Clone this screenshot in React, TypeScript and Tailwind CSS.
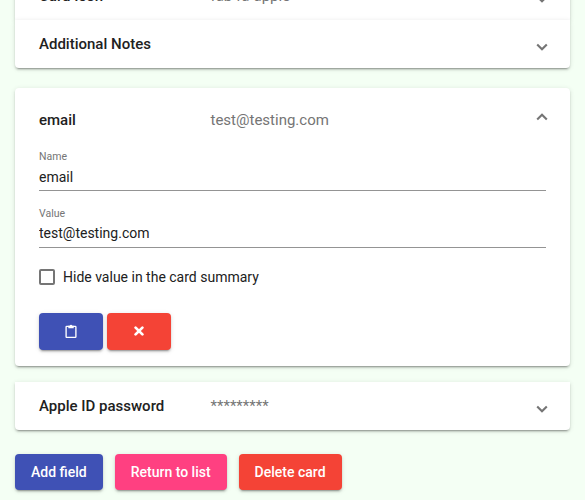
import React from "react";

function Chevron({ up = false, className = "" }: { up?: boolean; className?: string }) {
  return (
    <svg className={`block shrink-0 ${className}`} width="12" height="8" viewBox="0 0 12 8" fill="none" stroke="#757575" strokeWidth="2.1">
      <path d={up ? "M1.2 6.6 6 1.8 10.8 6.6" : "M1.2 1.5 6 6.3 10.8 1.5"} />
    </svg>
  );
}

const shadow =
  "shadow-[0_3px_1px_-2px_rgba(0,0,0,0.2),0_2px_2px_0_rgba(0,0,0,0.14),0_1px_5px_0_rgba(0,0,0,0.12)]";

function Header({ title, value = "" }: { title: string; value?: string }) {
  return (
    <div className="flex h-12 items-center pr-[22px] pl-6 text-[15px]">
      <span className="w-[171.5px] shrink-0 font-medium">{title}</span>
      <span className="flex-1 text-[#757575]">{value}</span>
      <Chevron className="mt-[5px]" />
    </div>
  );
}

function Field({ label, value, inputClass }: { label: string; value: string; inputClass: string }) {
  return (
    <label className="block h-[56.5px]">
      <span className="block h-[15px] text-[10.5px] leading-[15px] text-[#757575]">{label}</span>
      <input
        className={`block h-[27px] w-full border-b border-[#949494] bg-transparent text-sm outline-none ${inputClass}`}
        defaultValue={value}
      />
    </label>
  );
}

function Button({ className, children }: { className: string; children: React.ReactNode }) {
  return (
    <button className={`flex items-center justify-center rounded px-4 text-sm font-medium text-white ${shadow} ${className}`}>
      {children}
    </button>
  );
}

export default function App() {
  return (
    <main className="h-[500px] overflow-hidden bg-[#f4fff4] px-[15px] font-['Roboto',sans-serif] text-[#212121]">
      <section className="-mt-7">
        <div className={`bg-white ${shadow}`}>
          <Header title="Card Icon" value="fab fa-apple" />
        </div>
        <div className={`rounded-b bg-white ${shadow}`}>
          <Header title="Additional Notes" />
        </div>
      </section>

      <section className={`mt-5 h-[278px] rounded bg-white ${shadow}`}>
        <div className="flex h-16 items-center pr-[22px] pl-6 text-[15px]">
          <span className="w-[171.5px] shrink-0 font-medium">email</span>
          <span className="flex-1 text-[#757575]">test@testing.com</span>
          <Chevron up className="-mt-[7px]" />
        </div>
        <div className="-mt-[3px] px-6">
          <Field label="Name" value="email" inputClass="pb-0" />
          <Field label="Value" value="test@testing.com" inputClass="pb-0.5" />
          <label className="mt-[5px] flex h-5 items-center gap-2 text-sm">
            <span className="size-4 rounded-[2px] border-2 border-[#757575]" />
            Hide value in the card summary
          </label>
          <div className="mt-[26px] flex gap-1">
            <Button className="h-[37px] w-16 bg-[#3f51b5]">
              <svg width="12" height="15" viewBox="0 0 12 15" fill="none" stroke="white">
                <rect x="1.1" y="2.3" width="9.8" height="11.1" rx=".6" strokeWidth="1.35" />
                <path d="M3.3 1.7h1.4a1.4 1.4 0 0 1 2.6 0h1.4v2.5H3.3z" fill="white" stroke="none" />
              </svg>
            </Button>
            <Button className="h-[37px] w-16 bg-[#f44336]">
              <svg className="-mt-px" width="10" height="10" viewBox="0 0 10 10" stroke="white" strokeWidth="2.7" strokeLinecap="round">
                <path d="m1.6 1.6 6.8 6.8m0-6.8L1.6 8.4" />
              </svg>
            </Button>
          </div>
        </div>
      </section>

      <section className={`mt-4 rounded-b bg-white ${shadow}`}>
        <Header title="Apple ID password" value="*********" />
      </section>

      <div className="mt-6 flex gap-3">
        <Button className="h-9 bg-[#3f51b5]">Add field</Button>
        <Button className="h-9 bg-[#ff4081]">Return to list</Button>
        <Button className="h-9 bg-[#f44336]">Delete card</Button>
      </div>
    </main>
  );
}
